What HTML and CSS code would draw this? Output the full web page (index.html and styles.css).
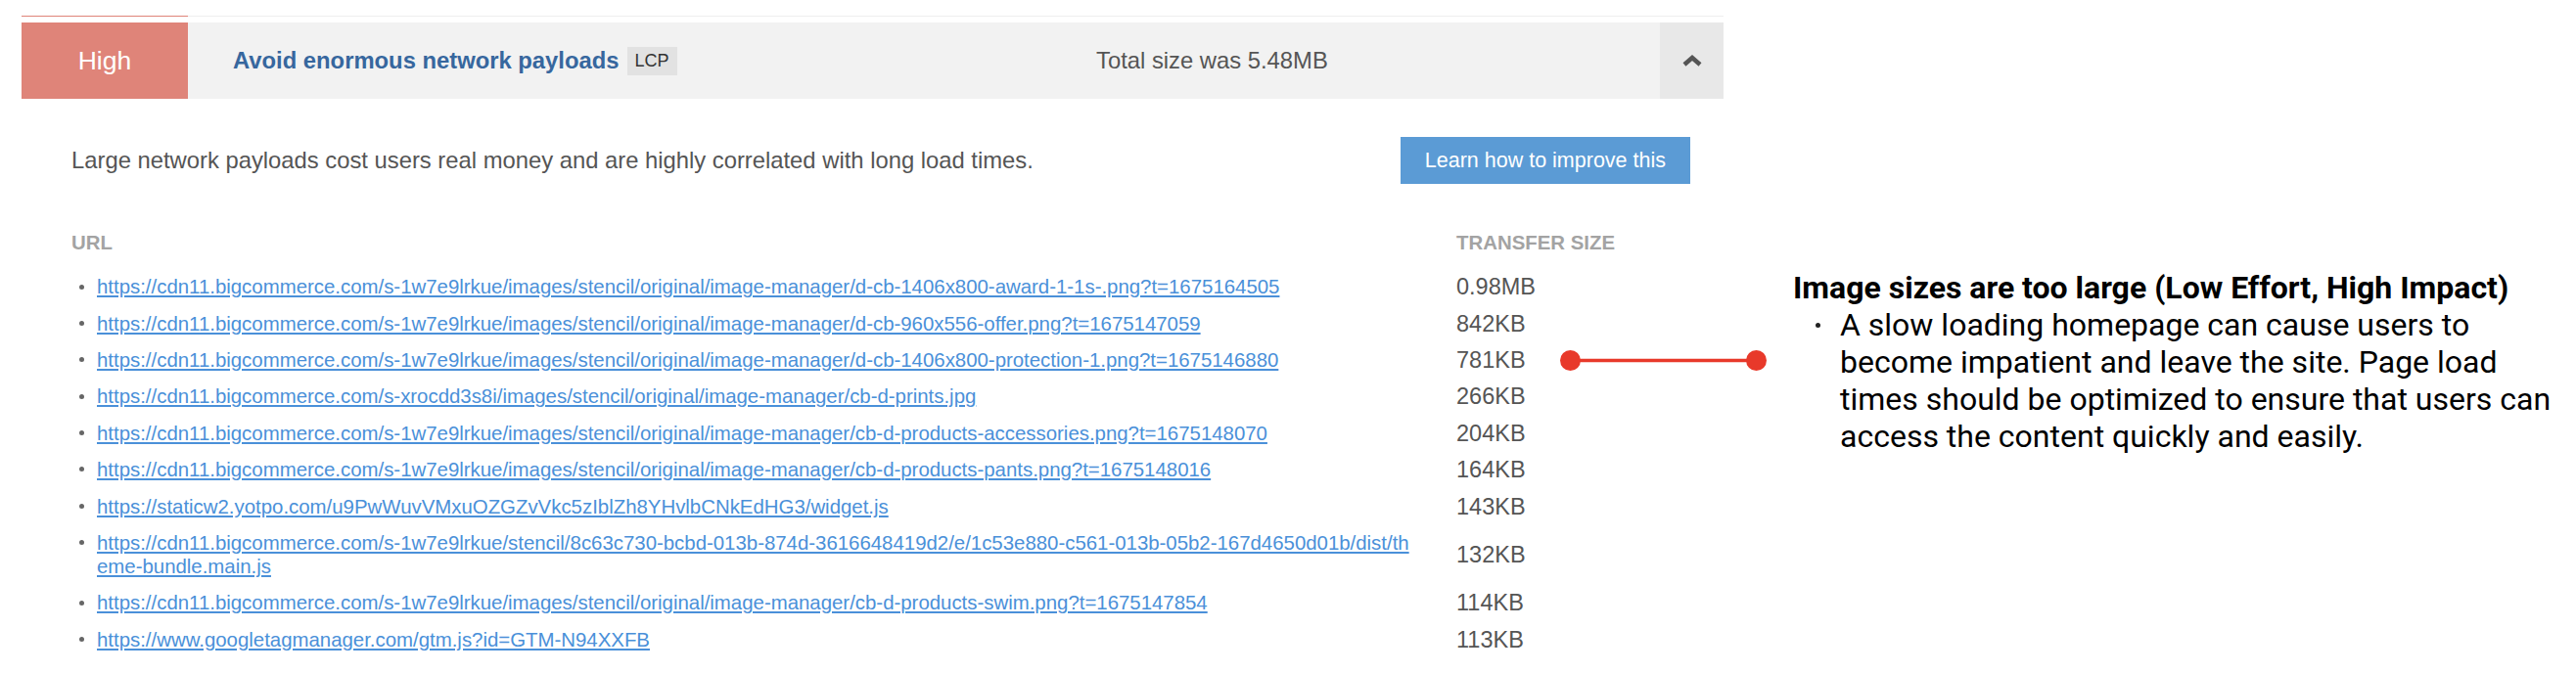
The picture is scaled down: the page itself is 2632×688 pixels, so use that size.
FILE: index.html
```html
<!DOCTYPE html>
<html lang="en">
<head>
    <meta charset="UTF-8">
    <meta name="viewport" content="width=device-width, initial-scale=1.0">
    <title>Avoid enormous network payloads</title>
    <link rel="stylesheet" href="styles.css">
</head>
<body>
    <div class="page">
        <div class="audit">
            <div class="audit-edge"><span class="audit-edge-grade"></span></div>
            <div class="audit-head">
                <div class="grade">High</div>
                <div class="audit-title">
                    <span class="audit-name">Avoid enormous network payloads</span>
                    <span class="tag">LCP</span>
                </div>
                <div class="audit-total">Total size was 5.48MB</div>
                <div class="audit-toggle">
                    <svg width="22" height="14" viewBox="0 0 22 14">
                        <polyline points="3,11 11,4 19,11" fill="none" stroke="#555" stroke-width="4.5" stroke-linejoin="miter"/>
                    </svg>
                </div>
            </div>
            <div class="audit-body">
                <div class="audit-intro">
                    <p>Large network payloads cost users real money and are highly correlated with long load times.</p>
                    <button class="btn-learn">Learn how to improve this</button>
                </div>
                <table class="resources">
                    <thead>
                        <tr>
                            <th class="col-url">URL</th>
                            <th class="col-size">TRANSFER SIZE</th>
                        </tr>
                    </thead>
                    <tbody>
                        <tr>
                            <td class="col-url"><a href="#">https://cdn11.bigcommerce.com/s-1w7e9lrkue/images/stencil/original/image-manager/d-cb-1406x800-award-1-1s-.png?t=1675164505</a></td>
                            <td class="col-size">0.98MB</td>
                        </tr>
                        <tr>
                            <td class="col-url"><a href="#">https://cdn11.bigcommerce.com/s-1w7e9lrkue/images/stencil/original/image-manager/d-cb-960x556-offer.png?t=1675147059</a></td>
                            <td class="col-size">842KB</td>
                        </tr>
                        <tr>
                            <td class="col-url"><a href="#">https://cdn11.bigcommerce.com/s-1w7e9lrkue/images/stencil/original/image-manager/d-cb-1406x800-protection-1.png?t=1675146880</a></td>
                            <td class="col-size">781KB</td>
                        </tr>
                        <tr>
                            <td class="col-url"><a href="#">https://cdn11.bigcommerce.com/s-xrocdd3s8i/images/stencil/original/image-manager/cb-d-prints.jpg</a></td>
                            <td class="col-size">266KB</td>
                        </tr>
                        <tr>
                            <td class="col-url"><a href="#">https://cdn11.bigcommerce.com/s-1w7e9lrkue/images/stencil/original/image-manager/cb-d-products-accessories.png?t=1675148070</a></td>
                            <td class="col-size">204KB</td>
                        </tr>
                        <tr>
                            <td class="col-url"><a href="#">https://cdn11.bigcommerce.com/s-1w7e9lrkue/images/stencil/original/image-manager/cb-d-products-pants.png?t=1675148016</a></td>
                            <td class="col-size">164KB</td>
                        </tr>
                        <tr>
                            <td class="col-url"><a href="#">https://staticw2.yotpo.com/u9PwWuvVMxuOZGZvVkc5zIblZh8YHvlbCNkEdHG3/widget.js</a></td>
                            <td class="col-size">143KB</td>
                        </tr>
                        <tr>
                            <td class="col-url"><a href="#">https://cdn11.bigcommerce.com/s-1w7e9lrkue/stencil/8c63c730-bcbd-013b-874d-3616648419d2/e/1c53e880-c561-013b-05b2-167d4650d01b/dist/theme-bundle.main.js</a></td>
                            <td class="col-size">132KB</td>
                        </tr>
                        <tr>
                            <td class="col-url"><a href="#">https://cdn11.bigcommerce.com/s-1w7e9lrkue/images/stencil/original/image-manager/cb-d-products-swim.png?t=1675147854</a></td>
                            <td class="col-size">114KB</td>
                        </tr>
                        <tr>
                            <td class="col-url"><a href="#">https://www.googletagmanager.com/gtm.js?id=GTM-N94XXFB</a></td>
                            <td class="col-size">113KB</td>
                        </tr>
                    </tbody>
                </table>
            </div>
        </div>

        <!-- line from the 781KB row out to the note -->
        <svg class="connector" width="211" height="21" viewBox="0 0 211 21">
            <line x1="10.5" y1="10.5" x2="200.5" y2="10.5" stroke="#e8392a" stroke-width="3.5"/>
            <circle cx="10.5" cy="10.5" r="10.5" fill="#e8392a"/>
            <circle cx="200.5" cy="10.5" r="10.5" fill="#e8392a"/>
        </svg>

        <div class="note">
            <h2 class="note-title">Image sizes are too large (Low Effort, High Impact)</h2>
            <ul class="note-list">
                <li>A slow loading homepage can cause users to become impatient and leave the site. Page load times should be optimized to ensure that users can access the content quickly and easily.</li>
            </ul>
        </div>
    </div>
</body>
</html>
```

FILE: styles.css
```css
/* Page */
body {
    margin: 0;
    background: #fff;
    font-family: "Liberation Sans", Arial, sans-serif;
    color: #555;
}

.page {
    position: relative;
    display: flex;
    align-items: flex-start;
    padding: 16px 0 0 22px;
}

/* Audit panel */
.audit {
    width: 1739px;
    flex: none;
}

.audit-edge {
    display: flex;
    height: 1px;
    background: #efefef;
    margin-bottom: 6px;
}

.audit-edge-grade {
    width: 170px;
    background: #df8479;
}

.audit-head {
    display: flex;
    height: 78px;
    background: #f2f2f2;
}

.grade {
    width: 170px;
    background: #df8479;
    color: #fff;
    font-size: 26.5px;
    display: flex;
    align-items: center;
    justify-content: center;
}

.audit-title {
    flex: 1;
    display: flex;
    align-items: center;
    padding-left: 46px;
}

.audit-name {
    color: #37679e;
    font-weight: bold;
    font-size: 23.8px;
}

.tag {
    margin-left: 8px;
    padding: 0 8px;
    background: #e2e2e2;
    color: #333;
    font-size: 18px;
    line-height: 29px;
}

.audit-total {
    width: 576px;
    display: flex;
    align-items: center;
    font-size: 23.8px;
}

.audit-toggle {
    width: 65px;
    background: #e8e8e8;
    display: flex;
    align-items: center;
    justify-content: center;
}

.audit-body {
    padding: 39px 34px 0 51px;
}

.audit-intro {
    display: flex;
    justify-content: space-between;
    align-items: center;
}

.audit-intro p {
    margin: 0;
    font-size: 23.8px;
}

.btn-learn {
    height: 48px;
    padding: 0 25px;
    border: none;
    background: #5b9bd5;
    color: #fff;
    font-family: inherit;
    font-size: 21.5px;
}

/* Resource table */
.resources {
    width: 100%;
    margin-top: 48px;
    border-collapse: collapse;
    table-layout: fixed;
}

.resources th {
    padding: 0 0 14.6px;
    text-align: left;
    font-size: 20.4px;
    line-height: 24px;
    color: #a3a3a3;
}

.resources th.col-url {
    width: 1415px;
}

.resources td {
    padding: 6.7px 0;
    line-height: 24px;
    vertical-align: middle;
}

.resources td.col-url {
    position: relative;
    padding-left: 26px;
    padding-right: 40px;
    font-size: 20.4px;
    word-break: break-all;
}

.resources td.col-url::before {
    content: '';
    position: absolute;
    left: 8px;
    top: 16px;
    width: 5px;
    height: 5px;
    border-radius: 50%;
    background: #666;
}

.resources a {
    color: #4a90d9;
}

.resources td.col-size {
    font-size: 23.5px;
    color: #555;
}

/* Annotation */
.connector {
    position: absolute;
    left: 1594px;
    top: 357.5px;
}

.note {
    width: 788px;
    margin: 259px 0 0 71px;
    font-family: Roboto, "Liberation Sans", sans-serif;
    color: #000;
}

.note-title {
    margin: 0;
    font-size: 32px;
    font-weight: bold;
    line-height: 38px;
    white-space: nowrap;
}

.note-list {
    width: 740px;
    margin: 0;
    padding-left: 48px;
    list-style: none;
}

.note-list li {
    position: relative;
    font-size: 32px;
    line-height: 38px;
}

.note-list li::before {
    content: '';
    position: absolute;
    left: -25px;
    top: 17px;
    width: 5px;
    height: 5px;
    border-radius: 50%;
    background: #222;
}
```
